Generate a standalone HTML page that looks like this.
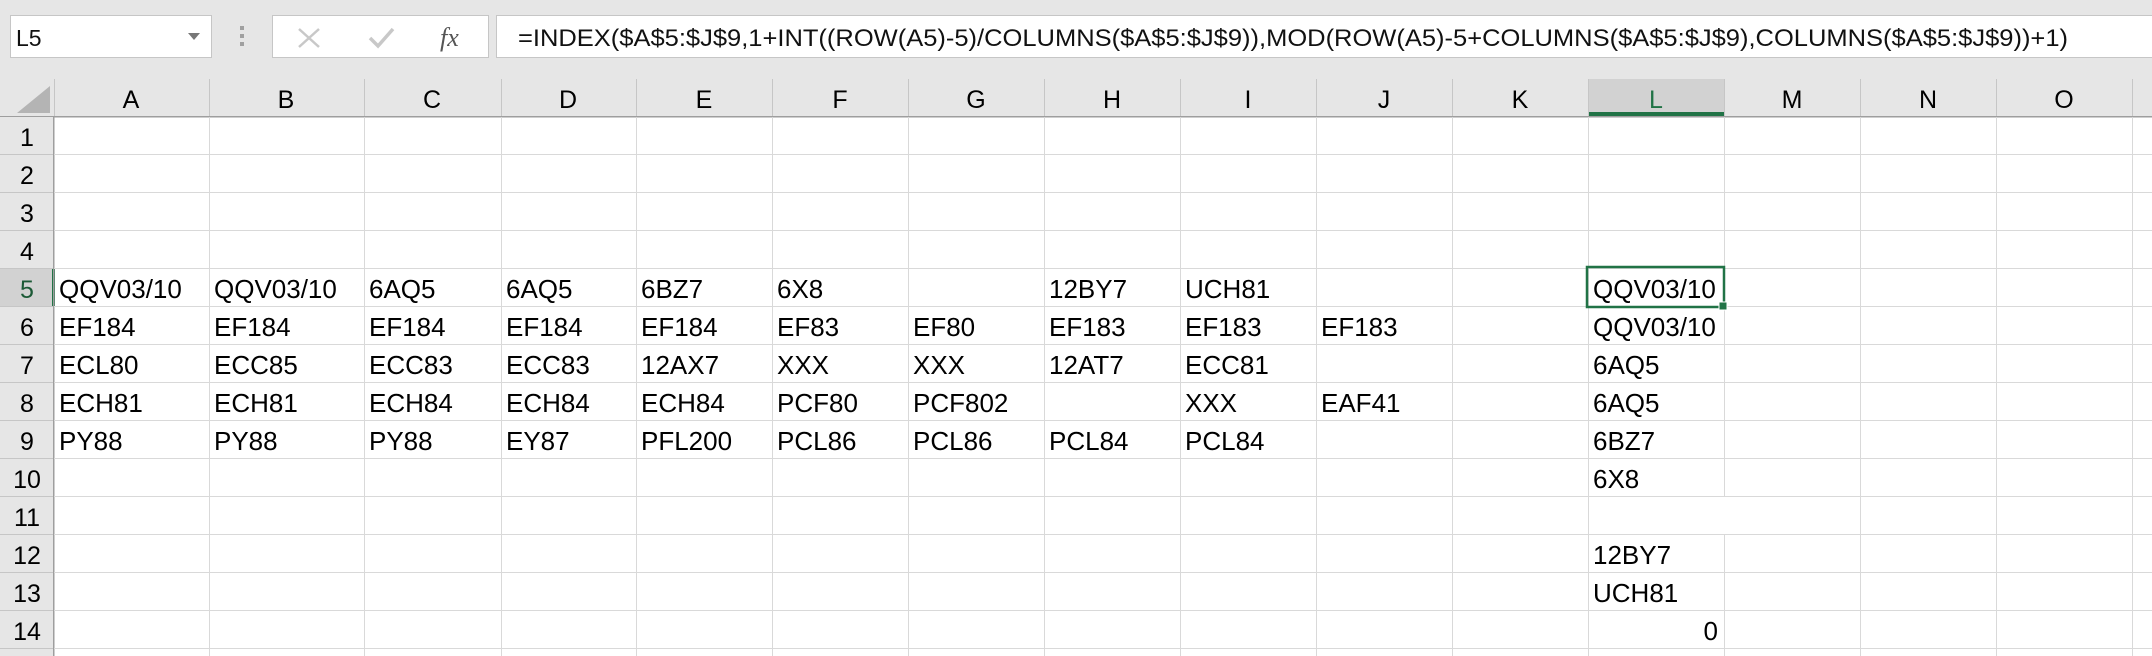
<!DOCTYPE html>
<html><head><meta charset="utf-8"><style>
html,body{margin:0;padding:0;background:#e6e6e6;}
svg{display:block;}
text{font-family:"Liberation Sans",sans-serif;}
</style></head><body>
<svg width="2152" height="656" viewBox="0 0 2152 656" xmlns="http://www.w3.org/2000/svg">
<rect x="0" y="0" width="2152" height="656" fill="#e6e6e6"/>
<rect x="10.5" y="15.5" width="201" height="42" fill="#fff" stroke="#c6c6c6"/>
<text x="16" y="46" font-size="23" fill="#111">L5</text>
<path d="M188 33 L200 33 L194 40 Z" fill="#777"/>
<rect x="240" y="26" width="4" height="4" fill="#a0a0a0"/>
<rect x="240" y="34" width="4" height="4" fill="#a0a0a0"/>
<rect x="240" y="42" width="4" height="4" fill="#a0a0a0"/>
<rect x="272.5" y="15.5" width="216" height="42" fill="#fff" stroke="#c6c6c6"/>
<path d="M299 29 L319 47 M319 29 L299 47" stroke="#c8c8c8" stroke-width="2.5"/>
<path d="M370 38 L378 46 L393 29" stroke="#c8c8c8" stroke-width="3.5" fill="none"/>
<text x="440" y="46" font-size="26" font-style="italic" fill="#555" style="font-family:'Liberation Serif',serif">fx</text>
<rect x="496.5" y="15.5" width="1660" height="42" fill="#fff" stroke="#c6c6c6"/>
<text x="518" y="46" font-size="24" fill="#111" textLength="1550" lengthAdjust="spacingAndGlyphs">=INDEX($A$5:$J$9,1+INT((ROW(A5)-5)/COLUMNS($A$5:$J$9)),MOD(ROW(A5)-5+COLUMNS($A$5:$J$9),COLUMNS($A$5:$J$9))+1)</text>
<rect x="54" y="116" width="2098" height="540" fill="#fff"/>
<rect x="0" y="79" width="2152" height="37" fill="#e6e6e6"/>
<rect x="1588" y="79" width="136" height="37" fill="#d2d2d2"/>
<rect x="1588" y="112" width="136" height="4" fill="#217346"/>
<path d="M50 86 L50 113 L17 113 Z" fill="#b4b4b4"/>
<g stroke="#c6c6c6" stroke-width="1">
<path d="M54.5 79 V116 M209.5 79 V116 M364.5 79 V116 M501.5 79 V116 M636.5 79 V116 M772.5 79 V116 M908.5 79 V116 M1044.5 79 V116 M1180.5 79 V116 M1316.5 79 V116 M1452.5 79 V116 M1588.5 79 V116 M1724.5 79 V116 M1860.5 79 V116 M1996.5 79 V116 M2132.5 79 V116"/>
</g>
<rect x="0" y="116" width="2152" height="1.5" fill="#9e9e9e"/>
<g font-size="25" fill="#000" text-anchor="middle">
<text x="131" y="108">A</text><text x="286" y="108">B</text><text x="432" y="108">C</text><text x="568" y="108">D</text><text x="704" y="108">E</text><text x="840" y="108">F</text><text x="976" y="108">G</text><text x="1112" y="108">H</text><text x="1248" y="108">I</text><text x="1384" y="108">J</text><text x="1520" y="108">K</text><text x="1656" y="108" fill="#217346">L</text><text x="1792" y="108">M</text><text x="1928" y="108">N</text><text x="2064" y="108">O</text>
</g>
<rect x="0" y="117" width="54" height="539" fill="#e6e6e6"/>
<rect x="0" y="268" width="54" height="38" fill="#d2d2d2"/>
<rect x="52" y="268" width="3" height="38" fill="#217346"/>
<g stroke="#c6c6c6">
<path d="M0 154.5 H54 M0 192.5 H54 M0 230.5 H54 M0 268.5 H54 M0 306.5 H54 M0 344.5 H54 M0 382.5 H54 M0 420.5 H54 M0 458.5 H54 M0 496.5 H54 M0 534.5 H54 M0 572.5 H54 M0 610.5 H54 M0 648.5 H54"/>
</g>
<rect x="53" y="116" width="1.5" height="540" fill="#9e9e9e"/>
<g font-size="25" fill="#000" text-anchor="middle">
<text x="27" y="146">1</text><text x="27" y="184">2</text><text x="27" y="222">3</text><text x="27" y="260">4</text><text x="27" y="298" fill="#1c5a36">5</text><text x="27" y="336">6</text><text x="27" y="374">7</text><text x="27" y="412">8</text><text x="27" y="450">9</text><text x="27" y="488">10</text><text x="27" y="526">11</text><text x="27" y="564">12</text><text x="27" y="602">13</text><text x="27" y="640">14</text>
</g>
<g stroke="#d9d9d9" stroke-width="1">
<path d="M54 154.5 H2152 M54 192.5 H2152 M54 230.5 H2152 M54 268.5 H2152 M54 306.5 H2152 M54 344.5 H2152 M54 382.5 H2152 M54 420.5 H2152 M54 458.5 H2152 M54 496.5 H2152 M54 534.5 H2152 M54 572.5 H2152 M54 610.5 H2152 M54 648.5 H2152"/>
<path d="M209.5 117 V656 M364.5 117 V656 M501.5 117 V656 M636.5 117 V656 M772.5 117 V656 M908.5 117 V656 M1044.5 117 V656 M1180.5 117 V656 M1316.5 117 V656 M1452.5 117 V656 M1588.5 117 V656 M1724.5 117 V496 M1724.5 534 V656 M1860.5 117 V656 M1996.5 117 V656 M2132.5 117 V656"/>
</g>
<g font-size="26" fill="#000">
<text x="59" y="298">QQV03/10</text><text x="214" y="298">QQV03/10</text><text x="369" y="298">6AQ5</text><text x="506" y="298">6AQ5</text><text x="641" y="298">6BZ7</text><text x="777" y="298">6X8</text><text x="1049" y="298">12BY7</text><text x="1185" y="298">UCH81</text><text x="1593" y="298">QQV03/10</text>
<text x="59" y="336">EF184</text><text x="214" y="336">EF184</text><text x="369" y="336">EF184</text><text x="506" y="336">EF184</text><text x="641" y="336">EF184</text><text x="777" y="336">EF83</text><text x="913" y="336">EF80</text><text x="1049" y="336">EF183</text><text x="1185" y="336">EF183</text><text x="1321" y="336">EF183</text><text x="1593" y="336">QQV03/10</text>
<text x="59" y="374">ECL80</text><text x="214" y="374">ECC85</text><text x="369" y="374">ECC83</text><text x="506" y="374">ECC83</text><text x="641" y="374">12AX7</text><text x="777" y="374">XXX</text><text x="913" y="374">XXX</text><text x="1049" y="374">12AT7</text><text x="1185" y="374">ECC81</text><text x="1593" y="374">6AQ5</text>
<text x="59" y="412">ECH81</text><text x="214" y="412">ECH81</text><text x="369" y="412">ECH84</text><text x="506" y="412">ECH84</text><text x="641" y="412">ECH84</text><text x="777" y="412">PCF80</text><text x="913" y="412">PCF802</text><text x="1185" y="412">XXX</text><text x="1321" y="412">EAF41</text><text x="1593" y="412">6AQ5</text>
<text x="59" y="450">PY88</text><text x="214" y="450">PY88</text><text x="369" y="450">PY88</text><text x="506" y="450">EY87</text><text x="641" y="450">PFL200</text><text x="777" y="450">PCL86</text><text x="913" y="450">PCL86</text><text x="1049" y="450">PCL84</text><text x="1185" y="450">PCL84</text><text x="1593" y="450">6BZ7</text>
<text x="1593" y="488">6X8</text>
<text x="1593" y="564">12BY7</text>
<text x="1593" y="602">UCH81</text>
<text x="1718" y="640" text-anchor="end">0</text>
</g>
<rect x="1587" y="267" width="137" height="40" fill="none" stroke="#217346" stroke-width="2.5"/>
<rect x="1719" y="302" width="8" height="8" fill="#217346" stroke="#fff" stroke-width="1"/>
</svg>
</body></html>
